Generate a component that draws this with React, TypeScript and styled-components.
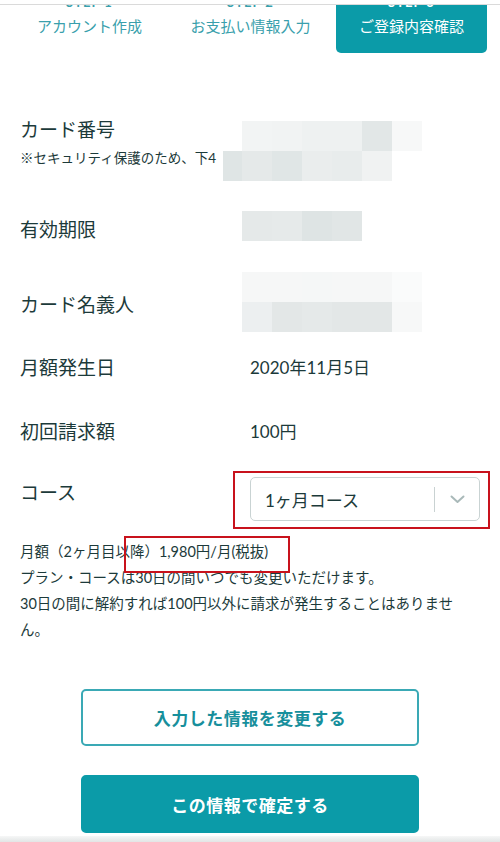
import React from 'react';
import styled, { createGlobalStyle, css } from 'styled-components';

const TEAL = '#0b9ba8';
const INK = '#1c3a3a';
const RED = '#c8121c';

const GlobalStyle = createGlobalStyle`
	body {
		margin: 0;
		background: #fff;
		color: ${INK};
		font-family: Lato, 'Noto Sans CJK JP', sans-serif;
	}
`;

const Page = styled.div`
	width: 500px;
	min-height: 842px;
	overflow: hidden;
`;

/* step tabs; the STEP captions are scrolled mostly out of view */
const Steps = styled.nav`
	margin-top: 4px;
	border-top: 1px solid #dadada;
	height: 48px;
	overflow: hidden;
	display: grid;
	grid-template-columns: repeat(3, 151px);
	column-gap: 10px;
	padding-left: 14px;
`;

const Tab = styled.div<{ $active?: boolean }>`
	display: flex;
	flex-direction: column;
	align-items: center;
	color: #3a9fac;

	${({ $active }) =>
		$active &&
		css`
			background: ${TEAL};
			color: #fff;
			border-radius: 0 0 5px 5px;
		`}
`;

const StepNo = styled.span`
	margin-top: -10px;
	font-size: 13px;
	font-weight: 700;
	line-height: 14px;
	letter-spacing: 1px;
`;

const StepName = styled.span`
	margin-top: 7px;
	font-size: 15px;
	line-height: 20px;
	white-space: nowrap;
`;

const Main = styled.main`
	padding: 0 20px;
`;

const Row = styled.section<{ $top: number }>`
	display: grid;
	grid-template-columns: 230px 1fr;
	align-items: start;
	margin-top: ${({ $top }) => $top}px;
`;

const LabelCell = styled.div<{ $top?: number }>`
	margin-top: ${({ $top }) => $top ?? 0}px;
`;

const Label = styled.div`
	font-size: 19px;
	line-height: 30px;
	white-space: nowrap;
`;

const Note = styled.div`
	margin-top: 3px;
	font-size: 13.5px;
	line-height: 20px;
	white-space: nowrap;
`;

const Value = styled.div`
	font-size: 17px;
	line-height: 30px;
`;

/* pixelated privacy blur */
const Mosaic = styled.div<{ $top?: number }>`
	margin-top: ${({ $top }) => $top ?? 0}px;
	display: flex;
	flex-direction: column;
`;

const MosaicRow = styled.div<{ $shift: number }>`
	display: flex;
	margin-left: ${({ $shift }) => $shift}px;
`;

const Cell = styled.div<{ $c: string; $w?: number }>`
	width: ${({ $w }) => $w ?? 30}px;
	height: 30px;
	background: ${({ $c }) => $c};
`;

const RedFrame = styled.div`
	margin-left: -17px;
	width: 257px;
	box-sizing: border-box;
	border: 2px solid ${RED};
	padding: 4px 8px 6px 15px;
`;

const Select = styled.div`
	height: 44px;
	box-sizing: border-box;
	border: 1px solid #c9d3d3;
	border-radius: 5px;
	display: flex;
	align-items: center;
`;

const SelectText = styled.span`
	flex: 1;
	padding-left: 14px;
	font-size: 17px;
`;

const Divider = styled.span`
	width: 1px;
	height: 25px;
	background: #c9d2d2;
`;

const Caret = styled.span`
	width: 44px;
	display: flex;
	justify-content: center;
	align-items: center;
`;

const Notice = styled.p`
	margin: 10px 0 0;
	max-width: 440px;
	font-size: 14.5px;
	line-height: 26px;
`;

const Marked = styled.span`
	position: relative;
	display: inline-block;

	&::after {
		content: '';
		position: absolute;
		top: -3px;
		left: -35px;
		right: -22px;
		bottom: -8px;
		border: 2px solid ${RED};
	}
`;

const Actions = styled.div`
	margin-top: 46px;
	display: flex;
	flex-direction: column;
	align-items: center;
	gap: 29px;
`;

const Button = styled.button<{ $primary?: boolean }>`
	width: 338px;
	height: 57px;
	box-sizing: border-box;
	border-radius: 5px;
	border: 2px solid #3aa9b5;
	background: #fff;
	color: #178f9c;
	font-family: inherit;
	font-size: 17px;
	font-weight: 700;
	letter-spacing: 0.5px;

	${({ $primary }) =>
		$primary &&
		css`
			height: 58px;
			border-color: ${TEAL};
			background: ${TEAL};
			color: #fff;
		`}
`;

const Shade = styled.div`
	margin-top: 3px;
	height: 6px;
	background: linear-gradient(#f6f7f7, #e2e5e5);
`;

const cardRows = [
	{ shift: -8, cells: ['#f2f4f4', '#f1f3f3', '#eef1f1', '#eef1f1', '#e2e7e7', '#f7f8f8'] },
	{ shift: -27, cells: ['#dfe5e5', '#e5e9e9', '#e0e6e6', '#eaeded', '#e8ecec', '#f0f2f2'] },
];
const expiryRows = [{ shift: -8, cells: ['#e5e9e9', '#e6eaea', '#dee4e4', '#e1e6e6'] }];
const nameRows = [
	{ shift: -8, cells: ['#f6f7f7', '#f6f7f7', '#f5f7f7', '#f6f7f7', '#f6f7f7', '#fafbfb'] },
	{ shift: -8, cells: ['#eceff0', '#e3e7e7', '#e5e9e9', '#e3e7e7', '#e3e7e7', '#f7f8f8'] },
];

const Blur = ({ rows, top }: { rows: { shift: number; cells: string[] }[]; top?: number }) => (
	<Mosaic $top={top}>
		{rows.map((r, i) => (
			<MosaicRow key={i} $shift={r.shift}>
				{r.cells.map((c, j) => (
					<Cell key={j} $c={c} $w={r.shift === -27 && j === 0 ? 19 : 30} />
				))}
			</MosaicRow>
		))}
	</Mosaic>
);

const ChevronDown = () => (
	<svg width="15" height="9" viewBox="0 0 15 9" fill="none">
		<path d="M1.5 1.5 L7.5 7 L13.5 1.5" stroke="#a9b9b9" strokeWidth="2" strokeLinecap="round" strokeLinejoin="round" />
	</svg>
);

export default function App() {
	return (
		<Page>
			<GlobalStyle />
			<Steps>
				<Tab>
					<StepNo>STEP 1</StepNo>
					<StepName>アカウント作成</StepName>
				</Tab>
				<Tab>
					<StepNo>STEP 2</StepNo>
					<StepName>お支払い情報入力</StepName>
				</Tab>
				<Tab $active>
					<StepNo>STEP 3</StepNo>
					<StepName>ご登録内容確認</StepName>
				</Tab>
			</Steps>

			<Main>
				<Row $top={62}>
					<LabelCell>
						<Label>カード番号</Label>
						<Note>※セキュリティ保護のため、下4</Note>
					</LabelCell>
					<Blur rows={cardRows} top={6} />
				</Row>

				<Row $top={30}>
					<LabelCell $top={4}>
						<Label>有効期限</Label>
					</LabelCell>
					<Blur rows={expiryRows} />
				</Row>

				<Row $top={27}>
					<LabelCell $top={18}>
						<Label>カード名義人</Label>
					</LabelCell>
					<Blur rows={nameRows} />
				</Row>

				<Row $top={21}>
					<Label>月額発生日</Label>
					<Value>2020年11月5日</Value>
				</Row>

				<Row $top={34}>
					<Label>初回請求額</Label>
					<Value>100円</Value>
				</Row>

				<Row $top={24}>
					<LabelCell $top={7}>
						<Label>コース</Label>
					</LabelCell>
					<RedFrame>
						<Select>
							<SelectText>1ヶ月コース</SelectText>
							<Divider />
							<Caret>
								<ChevronDown />
							</Caret>
						</Select>
					</RedFrame>
				</Row>

				<Notice>
					月額（2ヶ月目以降）<Marked>1,980円/月(税抜)</Marked>
					<br />
					プラン・コースは30日の間いつでも変更いただけます。
					<br />
					30日の間に解約すれば100円以外に請求が発生することはありません。
				</Notice>
			</Main>

			<Actions>
				<Button>入力した情報を変更する</Button>
				<Button $primary>この情報で確定する</Button>
			</Actions>
			<Shade />
		</Page>
	);
}
